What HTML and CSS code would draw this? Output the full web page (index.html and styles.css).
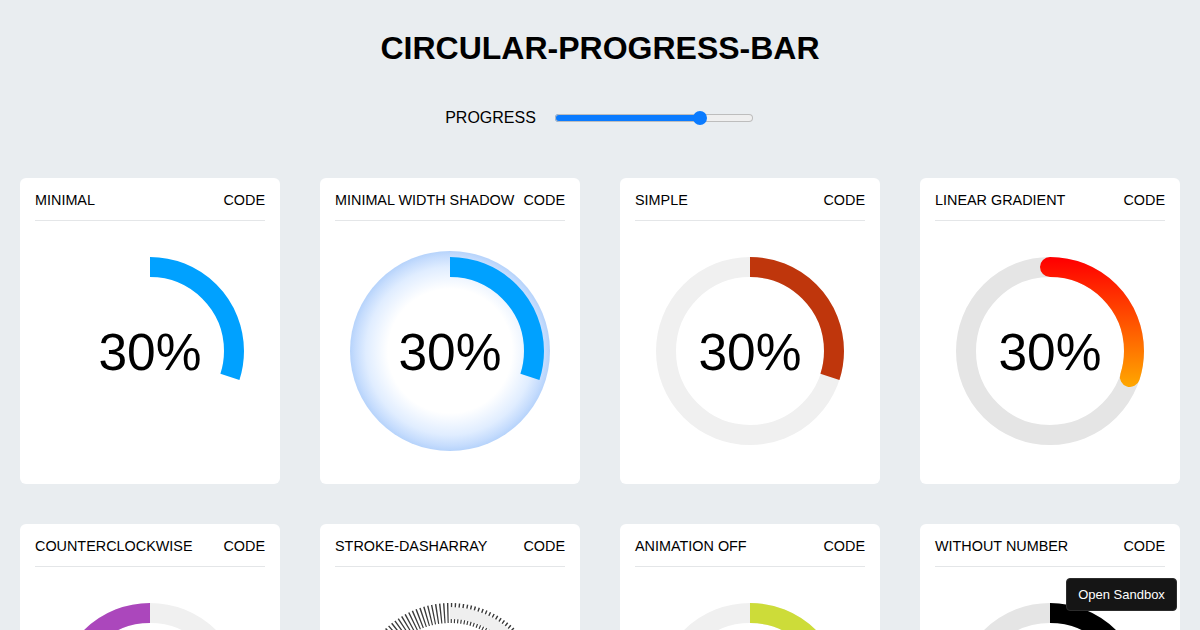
FILE: index.html
```html
<!DOCTYPE html>
<html lang="en">
<head>
<meta charset="utf-8">
<title>circular-progress-bar</title>
<link rel="stylesheet" href="styles.css">
</head>
<body>
<main class="page">
  <h1 class="title">CIRCULAR-PROGRESS-BAR</h1>
  <div class="controls">
    <label class="controls-label" for="progress">PROGRESS</label>
    <input class="range" id="progress" type="range" min="0" max="100" value="75">
  </div>

  <section class="grid">
    <article class="card">
      <header class="card-head"><span>MINIMAL</span><span>CODE</span></header>
      <div class="chart">
        <svg class="ring" viewBox="0 0 200 200" width="200" height="200">
          <path class="arc arc-minimal" pathLength="100" d="M100 16 A84 84 0 1 1 100 184 A84 84 0 1 1 100 16"/>
        </svg>
        <div class="value">30%</div>
      </div>
    </article>

    <article class="card">
      <header class="card-head"><span>MINIMAL WIDTH SHADOW</span><span>CODE</span></header>
      <div class="chart">
        <svg class="ring" viewBox="0 0 200 200" width="200" height="200">
          <defs>
            <radialGradient id="glow" cx="100" cy="100" r="100" gradientUnits="userSpaceOnUse">
              <stop offset="0" stop-color="#ffffff"/>
              <stop offset="0.62" stop-color="#ffffff"/>
              <stop offset="0.84" stop-color="#e0edff"/>
              <stop offset="0.95" stop-color="#c5dcfd"/>
              <stop offset="1" stop-color="#b6d3fb"/>
            </radialGradient>
          </defs>
          <circle cx="100" cy="100" r="100" fill="url(#glow)"/>
          <path class="arc arc-minimal" pathLength="100" d="M100 16 A84 84 0 1 1 100 184 A84 84 0 1 1 100 16"/>
        </svg>
        <div class="value">30%</div>
      </div>
    </article>

    <article class="card">
      <header class="card-head"><span>SIMPLE</span><span>CODE</span></header>
      <div class="chart">
        <svg class="ring" viewBox="0 0 200 200" width="200" height="200">
          <circle class="track track-light" cx="100" cy="100" r="84"/>
          <path class="arc arc-simple" pathLength="100" d="M100 16 A84 84 0 1 1 100 184 A84 84 0 1 1 100 16"/>
        </svg>
        <div class="value">30%</div>
      </div>
    </article>

    <article class="card">
      <header class="card-head"><span>LINEAR GRADIENT</span><span>CODE</span></header>
      <div class="chart">
        <svg class="ring" viewBox="0 0 200 200" width="200" height="200">
          <defs>
            <linearGradient id="fire" x1="0" y1="8" x2="0" y2="134" gradientUnits="userSpaceOnUse">
              <stop offset="0" stop-color="#ff0000"/>
              <stop offset="1" stop-color="#ffa500"/>
            </linearGradient>
          </defs>
          <circle class="track track-mid" cx="100" cy="100" r="84"/>
          <path class="arc arc-gradient" pathLength="100" d="M100 16 A84 84 0 1 1 100 184 A84 84 0 1 1 100 16"/>
        </svg>
        <div class="value">30%</div>
      </div>
    </article>

    <article class="card">
      <header class="card-head"><span>COUNTERCLOCKWISE</span><span>CODE</span></header>
      <div class="chart">
        <svg class="ring" viewBox="0 0 200 200" width="200" height="200">
          <circle class="track track-light" cx="100" cy="100" r="84"/>
          <path class="arc arc-ccw" pathLength="100" d="M100 16 A84 84 0 1 0 100 184 A84 84 0 1 0 100 16"/>
        </svg>
        <div class="value">30%</div>
      </div>
    </article>

    <article class="card">
      <header class="card-head"><span>STROKE-DASHARRAY</span><span>CODE</span></header>
      <div class="chart">
        <svg class="ring" viewBox="0 0 200 200" width="200" height="200">
          <circle class="track track-dash" cx="100" cy="100" r="84"/>
          <path class="arc arc-dash" pathLength="100" d="M100 16 A84 84 0 1 1 100 184 A84 84 0 1 1 100 16"/>
        </svg>
        <div class="value">30%</div>
      </div>
    </article>

    <article class="card">
      <header class="card-head"><span>ANIMATION OFF</span><span>CODE</span></header>
      <div class="chart">
        <svg class="ring" viewBox="0 0 200 200" width="200" height="200">
          <circle class="track track-light" cx="100" cy="100" r="84"/>
          <path class="arc arc-lime" pathLength="100" d="M100 16 A84 84 0 1 1 100 184 A84 84 0 1 1 100 16"/>
        </svg>
        <div class="value">30%</div>
      </div>
    </article>

    <article class="card">
      <header class="card-head"><span>WITHOUT NUMBER</span><span>CODE</span></header>
      <div class="chart">
        <svg class="ring" viewBox="0 0 200 200" width="200" height="200">
          <circle class="track track-mid" cx="100" cy="100" r="84"/>
          <path class="arc arc-black" pathLength="100" d="M100 16 A84 84 0 1 1 100 184 A84 84 0 1 1 100 16"/>
        </svg>
      </div>
    </article>
  </section>
</main>

<a class="sandbox" href="#">Open Sandbox</a>
</body>
</html>
```

FILE: styles.css
```css
* { box-sizing: border-box; }

html, body {
  margin: 0;
  padding: 0;
}

body {
  background: #e9edf0;
  color: #000;
  font-family: "Liberation Sans", Arial, sans-serif;
}

.page {
  display: flex;
  flex-direction: column;
  align-items: center;
  padding-top: 30px;
}

.title {
  margin: 0;
  font-size: 32px;
  line-height: 36px;
  font-weight: 700;
  letter-spacing: 0;
}

.controls {
  margin-top: 34px;
  height: 36px;
  display: flex;
  align-items: center;
  gap: 19px;
  margin-right: 2px;
}

.controls-label {
  font-size: 16px;
}

.range {
  -webkit-appearance: none;
  appearance: none;
  margin: 0;
  width: 198px;
  height: 8px;
  border-radius: 4px;
  background: linear-gradient(to right, #0a7bff 0, #0a7bff 74%, #efefef 74%, #efefef 100%);
  box-shadow: inset 0 0 0 1px #bdbdbd;
  outline: none;
}

.range::-webkit-slider-thumb {
  -webkit-appearance: none;
  appearance: none;
  width: 14px;
  height: 14px;
  border-radius: 50%;
  background: #0a7bff;
  border: none;
}

.grid {
  margin-top: 42px;
  width: 100%;
  padding: 0 20px 40px;
  display: grid;
  grid-template-columns: repeat(4, 260px);
  column-gap: 40px;
  row-gap: 40px;
}

.card {
  background: #fff;
  border-radius: 6px;
  padding: 0 15px;
  height: 306px;
  display: flex;
  flex-direction: column;
  align-items: center;
}

.card-head {
  width: 100%;
  height: 43px;
  display: flex;
  justify-content: space-between;
  align-items: center;
  padding-top: 2px;
  border-bottom: 1px solid #e4e6e8;
  font-size: 14.4px;
  line-height: 16px;
}

.chart {
  margin-top: 30px;
  width: 200px;
  height: 200px;
  display: grid;
  place-items: center;
}

.chart > * {
  grid-area: 1 / 1;
}

.ring {
  display: block;
}

.value {
  font-size: 51.5px;
  line-height: 58px;
  margin-top: 2px;
}

.track,
.arc {
  fill: none;
  stroke-width: 20;
}

.track-light { stroke: #f0f0f0; }
.track-mid { stroke: #e5e5e5; }

.track-dash {
  stroke: #3a3a3a;
  stroke-dasharray: 1.3 2.3;
}

.arc {
  stroke-dasharray: 30 100;
}

.arc-minimal { stroke: #00a1ff; }
.arc-simple { stroke: #bf360c; }
.arc-gradient {
  stroke: url(#fire);
  stroke-linecap: round;
}
.arc-ccw { stroke: #ab47bc; }
.arc-lime { stroke: #cddc39; }
.arc-black { stroke: #000; }
.arc-dash {
  stroke: #efefef;
  stroke-width: 12;
}

.sandbox {
  position: fixed;
  right: 23px;
  bottom: 19px;
  width: 111px;
  height: 33px;
  display: flex;
  align-items: center;
  justify-content: center;
  background: #151515;
  border: 1px solid #2c2c2c;
  border-radius: 4px;
  color: #fff;
  font-size: 13px;
  text-decoration: none;
}
```
